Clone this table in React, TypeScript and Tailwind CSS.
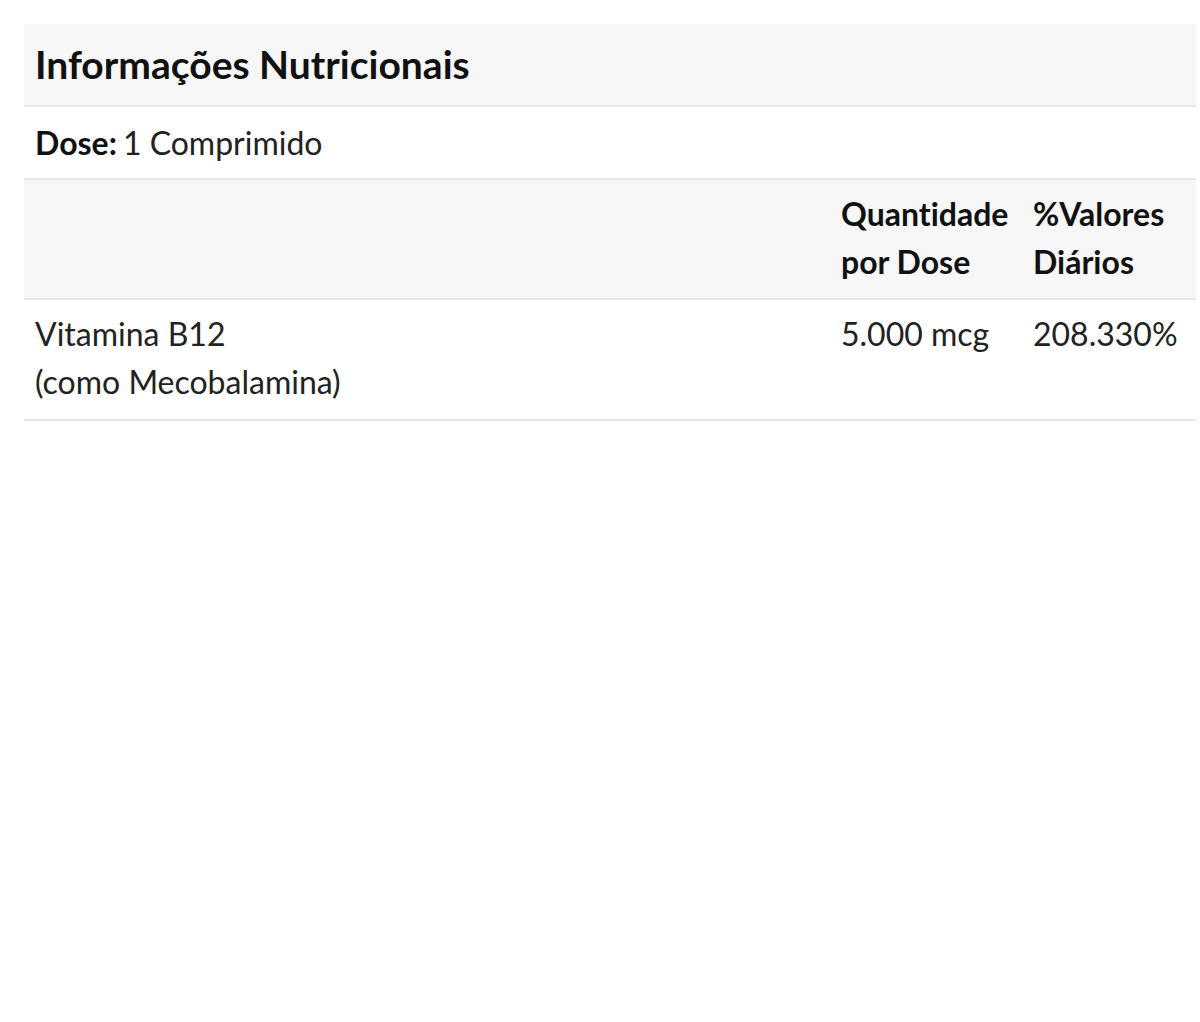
const rows = [
  { name: ['Vitamina B12', '(como Mecobalamina)'], amount: '5.000 mcg', dv: '208.330%' },
]

export default function App() {
  return (
    <div className="min-h-screen bg-white p-6 font-['Lato','Liberation_Sans',sans-serif] text-[#222] [font-variant-ligatures:none]">
      <div className="w-[1172px]">
        <div className="flex h-[83px] items-center border-b-2 border-[#e8e8e8] bg-[#f7f7f7] px-[11px]">
          <h2 className="text-[39px] font-bold leading-none text-[#111]">Informações Nutricionais</h2>
        </div>
        <div className="flex h-[73px] items-center border-b-2 border-[#e8e8e8] px-[11px] text-[32px] text-[#222]">
          <span className="font-bold text-[#111]">Dose:</span>
          <span className="ml-[6px]">1 Comprimido</span>
        </div>
        <div className="grid grid-cols-[806px_192px_174px] border-b-2 border-[#e8e8e8] bg-[#f7f7f7] pt-[10px] pb-[12px] text-[32px] leading-[48px] font-bold text-[#111]">
          <div />
          <div className="px-[11px]">
            Quantidade
            <br />
            por Dose
          </div>
          <div className="px-[11px]">
            %Valores
            <br />
            Diários
          </div>
        </div>
        {rows.map((r) => (
          <div
            key={r.amount}
            className="grid grid-cols-[806px_192px_174px] border-b-2 border-[#e8e8e8] pt-[10px] pb-[13px] text-[32px] leading-[48px] text-[#222]"
          >
            <div className="px-[11px]">
              {r.name[0]}
              <br />
              {r.name[1]}
            </div>
            <div className="px-[11px]">{r.amount}</div>
            <div className="px-[11px]">{r.dv}</div>
          </div>
        ))}
      </div>
    </div>
  )
}
